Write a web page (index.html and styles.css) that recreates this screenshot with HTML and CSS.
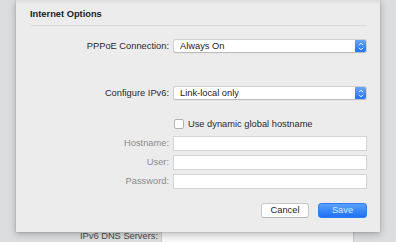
FILE: index.html
```html
<!DOCTYPE html>
<html>
<head>
<meta charset="utf-8">
<link rel="stylesheet" href="styles.css">
</head>
<body>
<div class="window">
  <div class="behind-row">
    <span class="behind-label">IPv6 DNS Servers:</span>
    <span class="behind-field"></span>
  </div>

  <div class="sheet">
    <div class="title">Internet Options</div>
    <div class="separator"></div>

    <div class="row row-pppoe">
      <span class="label">PPPoE Connection:</span>
      <div class="popup">
        <span class="popup-text">Always On</span>
        <span class="popup-arrows">
          <svg width="6" height="9" viewBox="0 0 6 9"><path d="M1 3.2 L3 1.2 L5 3.2 M1 5.8 L3 7.8 L5 5.8" fill="none" stroke="#fff" stroke-width="1"/></svg>
        </span>
      </div>
    </div>

    <div class="row row-ipv6">
      <span class="label">Configure IPv6:</span>
      <div class="popup">
        <span class="popup-text">Link-local only</span>
        <span class="popup-arrows">
          <svg width="6" height="9" viewBox="0 0 6 9"><path d="M1 3.2 L3 1.2 L5 3.2 M1 5.8 L3 7.8 L5 5.8" fill="none" stroke="#fff" stroke-width="1"/></svg>
        </span>
      </div>
    </div>

    <div class="row row-check">
      <span class="label"></span>
      <label class="check">
        <span class="box"></span>
        <span class="check-text">Use dynamic global hostname</span>
      </label>
    </div>

    <div class="fields">
      <div class="row">
        <span class="label disabled">Hostname:</span>
        <span class="field"></span>
      </div>
      <div class="row">
        <span class="label disabled">User:</span>
        <span class="field"></span>
      </div>
      <div class="row">
        <span class="label disabled">Password:</span>
        <span class="field"></span>
      </div>
    </div>

    <div class="buttons">
      <button class="btn btn-cancel">Cancel</button>
      <button class="btn btn-save">Save</button>
    </div>
  </div>
</div>
</body>
</html>
```

FILE: styles.css
```css
* { box-sizing: border-box; }

html, body {
  margin: 0;
  padding: 0;
  width: 396px;
  height: 242px;
  overflow: hidden;
  background: #dcdddf;
  font-family: "Liberation Sans", Arial, sans-serif;
  font-size: 9.3px;
  color: #2a2a2a;
}

.window {
  position: relative;
  width: 396px;
  height: 242px;
  padding-top: 230px;
}

.behind-row {
  display: flex;
  align-items: flex-start;
}

.behind-label {
  width: 158px;
  text-align: right;
  color: #4a4a4a;
  line-height: 10px;
  padding-top: 1px;
}

.behind-field {
  margin-left: 3px;
  width: 193px;
  height: 14px;
  background: #f7f7f7;
  border: 1px solid #c9c9c9;
}

.sheet {
  position: absolute;
  left: 16px;
  top: 0;
  width: 364px;
  height: 232px;
  background: #ececec;
  box-shadow: 0 2px 7px rgba(0,0,0,0.28), 0 0 1px rgba(0,0,0,0.25), inset 0 5px 5px -4px rgba(0,0,0,0.10);
  padding: 9px 13px 0 14px;
  display: flex;
  flex-direction: column;
}

.title {
  font-weight: bold;
  line-height: 11px;
  color: #222;
}

.separator {
  height: 1px;
  background: #d8d8d8;
  margin: 5px 0 0 1px;
}

.row {
  display: flex;
  align-items: center;
  height: 14px;
}

.label {
  width: 139px;
  flex: none;
  text-align: right;
  color: #2a2a2a;
  margin-right: 4px;
}

.label.disabled { color: #8a8a8a; }

.row-pppoe { margin-top: 13px; }
.row-ipv6 { margin-top: 33px; }
.row-check { margin-top: 19px; height: 10px; }

.popup {
  width: 194px;
  height: 14px;
  background: #fff;
  border: 1px solid #cfcfcf;
  border-bottom-color: #bcbcbc;
  border-radius: 3px;
  display: flex;
  align-items: center;
  overflow: hidden;
  box-shadow: 0 0.5px 0.5px rgba(0,0,0,0.06);
}

.popup-text {
  flex: 1;
  padding-left: 6px;
  line-height: 12px;
  color: #222;
}

.popup-arrows {
  width: 12px;
  height: 14px;
  margin: -1px -1px -1px 0;
  background: linear-gradient(#6aa9fb, #1b6ef6);
  border-radius: 0 3px 3px 0;
  display: flex;
  align-items: center;
  justify-content: center;
}

.check {
  display: flex;
  align-items: center;
}

.box {
  width: 10px;
  height: 10px;
  background: #fff;
  border: 1px solid #b3b3b3;
  border-radius: 2px;
  margin-left: 1px;
  margin-right: 4px;
}

.check-text { color: #2a2a2a; }

.fields {
  margin-top: 7px;
  display: flex;
  flex-direction: column;
  gap: 5px;
}

.field {
  width: 194px;
  height: 15px;
  background: #fff;
  border: 1px solid #d4d4d4;
}

.buttons {
  margin-top: 15px;
  display: flex;
  justify-content: flex-end;
  gap: 9px;
}

.btn {
  font-family: inherit;
  font-size: 9.3px;
  height: 15px;
  border-radius: 3px;
  padding: 0;
  line-height: 13px;
}

.btn-cancel {
  width: 48px;
  background: #fff;
  border: 1px solid #c8c8c8;
  border-bottom-color: #b4b4b4;
  color: #222;
}

.btn-save {
  width: 49px;
  background: linear-gradient(#5aa2fb, #1c70f5);
  border: 1px solid #2f7cf0;
  color: #dbe8ff;
}
```
